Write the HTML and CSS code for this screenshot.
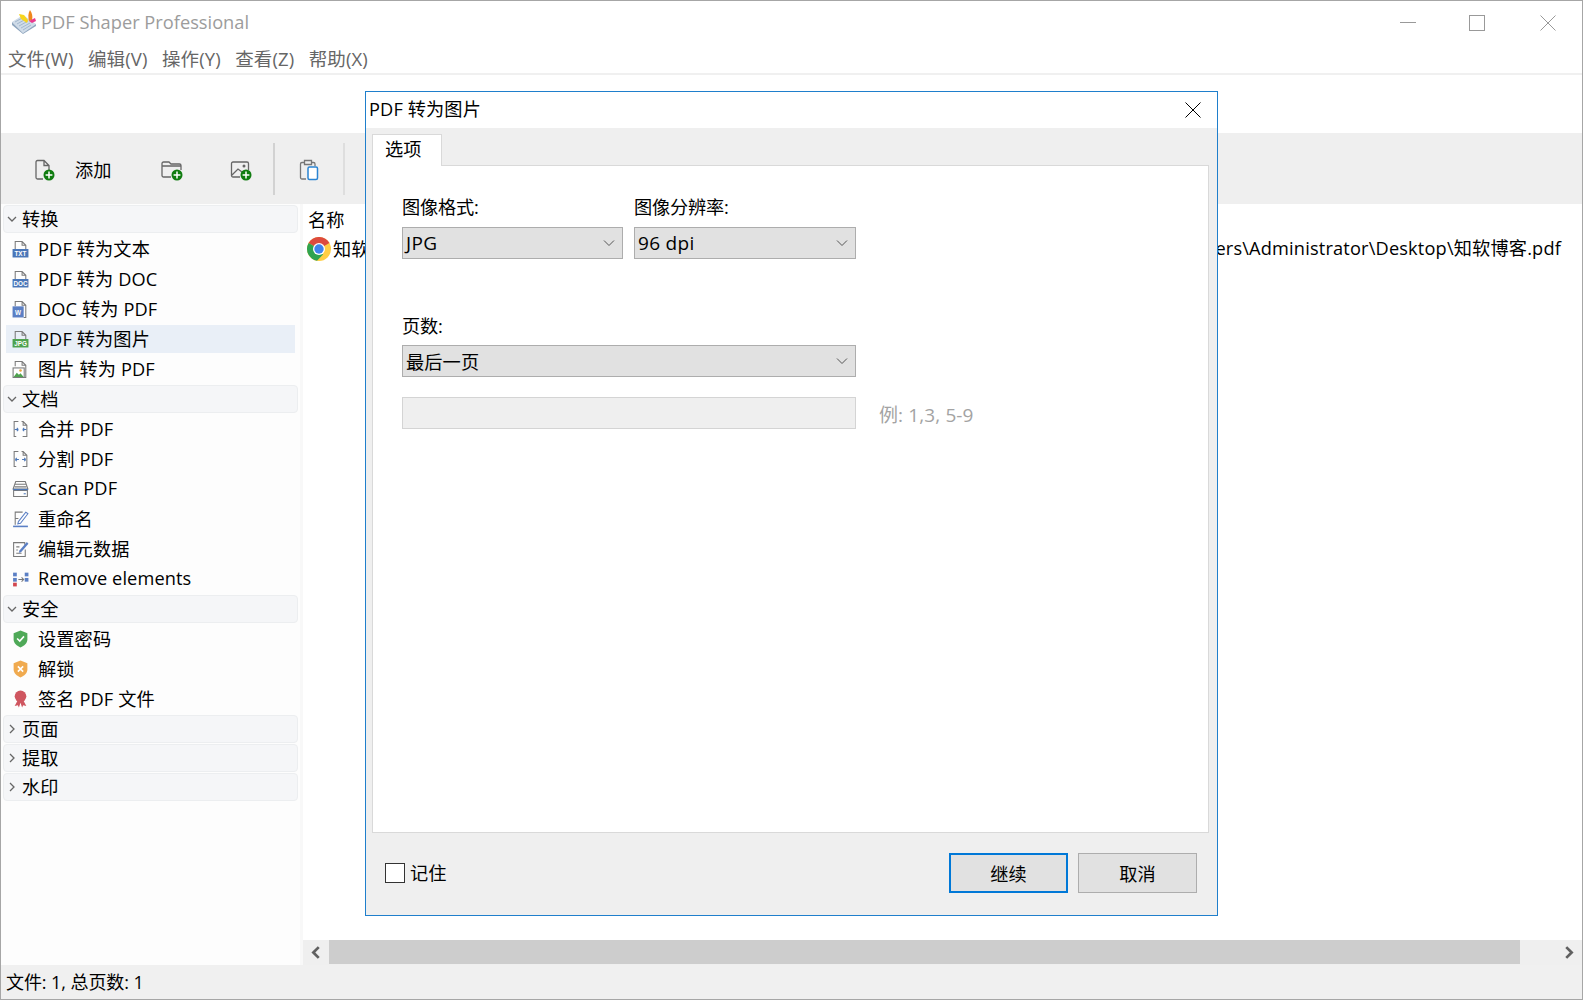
FILE: index.html
```html
<!DOCTYPE html>
<html lang="zh-CN">
<head>
<meta charset="utf-8">
<title>PDF Shaper Professional</title>
<link rel="stylesheet" href="styles.css">
</head>
<body>
<svg class="defs" width="0" height="0" aria-hidden="true">
  <defs>
    <symbol id="sheet" viewBox="0 0 16 17">
      <path d="M3 9V1.500h6.500L13 5v4M9.500 1.500V5H13" fill="none" stroke="#7a7a7a" stroke-width="1"/>
    </symbol>
    <symbol id="plus" viewBox="0 0 12 12">
      <circle cx="6" cy="6" r="5.500" fill="#107c10"/>
      <path d="M6 2.600v6.800M2.600 6h6.800" stroke="#fff" stroke-width="1.500"/>
    </symbol>
  </defs>
</svg>

<div class="window">
  <header class="titlebar">
    <div class="title-left">
      <svg class="logo" viewBox="0 0 24 24">
        <path d="M0 12 11 5l13 9-13 9z" fill="#cfdbe8"/>
        <path d="M0 12l11 11 13-9v2l-13 8L0 15z" fill="#8fa6bf"/>
        <path d="M3 12l9-5M5 14l9-5M7 16l9-5M9 18l9-5M11 20l8-5" stroke="#a3b8ce" stroke-width="1"/>
        <path d="M7 4l5 1 4 5-1 3-6-4z" fill="#f7d51d"/>
        <path d="M18 0c2 3 3 6 2 10l-3 1c-1-4-1-8 1-11z" fill="#f0861c"/>
        <path d="M17 11l6-3 1 3-4 2z" fill="#ea3a8f"/>
      </svg>
      <span class="app-name">PDF Shaper Professional</span>
    </div>
    <div class="win-controls">
      <svg class="win-btn win-min" viewBox="0 0 16 16"><path d="M0 7.500h16" stroke="#999" fill="none"/></svg>
      <svg class="win-btn" viewBox="0 0 16 16"><rect x=".5" y=".5" width="15" height="15" fill="none" stroke="#999"/></svg>
      <svg class="win-btn" viewBox="0 0 16 16"><path d="M.5.500l15 15M15.500.500l-15 15" stroke="#999" fill="none"/></svg>
    </div>
  </header>

  <nav class="menubar">
    <span>文件(W)</span><span>编辑(V)</span><span>操作(Y)</span><span>查看(Z)</span><span>帮助(X)</span>
  </nav>

  <div class="blank"></div>

  <div class="toolbar">
    <div class="tool tool-add">
      <svg class="tool-icon" viewBox="0 0 22 22">
        <path d="M3 18.500V3a1.500 1.500 0 0 1 1.500-1.500H11L16 6.500V11M11 1.500v5h5M3 18.500a1.500 1.500 0 0 0 1.500 1.500H10" fill="none" stroke="#666" stroke-width="1.300"/>
        <use href="#plus" x="10" y="10" width="12" height="12"/>
      </svg>
      <span>添加</span>
    </div>
    <div class="tool tool-folder">
      <svg class="tool-icon" viewBox="0 0 22 22">
        <path d="M10 18H2.500A1.500 1.500 0 0 1 1 16.500V4.500A1.500 1.500 0 0 1 2.500 3H8l2 2h8.500A1.500 1.500 0 0 1 20 6.500V11M1 7h19" fill="none" stroke="#666" stroke-width="1.300"/>
        <use href="#plus" x="10" y="10" width="12" height="12"/>
      </svg>
    </div>
    <div class="tool tool-image">
      <svg class="tool-icon" viewBox="0 0 22 22">
        <path d="M10 18H3a1.500 1.500 0 0 1-1.500-1.500v-12A1.500 1.500 0 0 1 3 3h14a1.500 1.500 0 0 1 1.500 1.500V11M2 16l6-6 4 3" fill="none" stroke="#666" stroke-width="1.300"/>
        <circle cx="14" cy="7" r="1.500" fill="#666"/>
        <use href="#plus" x="10" y="10" width="12" height="12"/>
      </svg>
    </div>
    <div class="sep sep-dark"></div>
    <div class="tool tool-clip">
      <svg class="tool-icon" viewBox="0 0 20 22">
        <path d="M7 20H3a1.500 1.500 0 0 1-1.500-1.500V5A1.500 1.500 0 0 1 3 3.500h2M13 3.500h1.500A1.500 1.500 0 0 1 16 5v2M5.500 1.500h7v4h-7z" fill="none" stroke="#777" stroke-width="1.300"/>
        <rect x="9" y="8" width="9.500" height="12.500" rx="1.500" fill="#fff" stroke="#2a84d2" stroke-width="1.500"/>
      </svg>
    </div>
    <div class="sep sep-light"></div>
  </div>

  <div class="main">
    <aside class="sidebar">
      <div class="group"><svg class="caret" viewBox="0 0 10 10"><path d="M1 3l4 4 4-4" fill="none" stroke="#666" stroke-width="1.300"/></svg><span>转换</span></div>
      <div class="item">
        <svg class="ico" viewBox="0 0 16 17"><use href="#sheet"/><rect x=".5" y="8.500" width="15" height="8" fill="#4a76b8"/><text x="8" y="15" class="ico-text">TXT</text></svg>
        <span>PDF 转为文本</span>
      </div>
      <div class="item">
        <svg class="ico" viewBox="0 0 16 17"><use href="#sheet"/><rect x=".5" y="8.500" width="15" height="8" fill="#4a76b8"/><text x="8" y="15" class="ico-text">DOC</text></svg>
        <span>PDF 转为 DOC</span>
      </div>
      <div class="item">
        <svg class="ico" viewBox="0 0 16 17"><path d="M3 6V1.500h6.500L13 5v11.500h-2M9.500 1.500V5H13" fill="none" stroke="#7a7a7a"/><rect x=".5" y="6" width="10.500" height="10.500" fill="#5b7fc4"/><text x="5.700" y="14" class="ico-text">W</text></svg>
        <span>DOC 转为 PDF</span>
      </div>
      <div class="item selected">
        <svg class="ico" viewBox="0 0 16 17"><use href="#sheet"/><rect x=".5" y="8.500" width="15" height="8" fill="#4ea24e"/><text x="8" y="15" class="ico-text">JPG</text></svg>
        <span>PDF 转为图片</span>
      </div>
      <div class="item">
        <svg class="ico" viewBox="0 0 16 17"><path d="M3 6V1.500h6.500L13 5v11.500h-2M9.500 1.500V5H13" fill="none" stroke="#7a7a7a"/><rect x="1" y="7.500" width="10.500" height="9" fill="#fff" stroke="#7a7a7a"/><path d="M1.500 16l3-4 2 2 1.500-1.500 3 3.500z" fill="#4ea24e"/><circle cx="8" cy="10" r="1.200" fill="#e8a33d"/></svg>
        <span>图片 转为 PDF</span>
      </div>

      <div class="group"><svg class="caret" viewBox="0 0 10 10"><path d="M1 3l4 4 4-4" fill="none" stroke="#666" stroke-width="1.300"/></svg><span>文档</span></div>
      <div class="item">
        <svg class="ico" viewBox="0 0 16 17"><path d="M6 1.500H2v14h2M10 15.500h4V5l-3.500-3.500H9M10.500 1.500V5H14" fill="none" stroke="#7a7a7a"/><path d="M2.500 9H6M6 9L4.500 7.500M6 9l-1.500 1.500M13.500 9H10M10 9l1.500-1.500M10 9l1.500 1.500" fill="none" stroke="#4a76b8"/></svg>
        <span>合并 PDF</span>
      </div>
      <div class="item">
        <svg class="ico" viewBox="0 0 16 17"><path d="M6 1.500H2v14h2M10 15.500h4V5l-3.500-3.500H9M10.500 1.500V5H14" fill="none" stroke="#7a7a7a"/><path d="M3 9h3.500M3 9l1.500-1.500M3 9l1.500 1.500M13 9H9.500M13 9l-1.500-1.500M13 9l-1.500 1.500" fill="none" stroke="#4a76b8"/></svg>
        <span>分割 PDF</span>
      </div>
      <div class="item">
        <svg class="ico" viewBox="0 0 16 17"><path d="M3.500 1.500h9L15 8.500H1zM1.500 10h13v5.500h-13zM3 4h10M2.500 6.500h11" fill="none" stroke="#7a7a7a"/><path d="M1 9h14" stroke="#4a76b8" stroke-width="1.200"/><path d="M11 13h2" stroke="#4a76b8"/></svg>
        <span>Scan PDF</span>
      </div>
      <div class="item">
        <svg class="ico" viewBox="0 0 16 17"><path d="M10 2H3v12M3 8h3" fill="none" stroke="#7a7a7a"/><path d="M6 11l7-9 2 1.500-7 9-2.500.5z" fill="#fff" stroke="#5b7fc4"/><path d="M1 15.500h14" stroke="#5b7fc4" stroke-width="1.500"/></svg>
        <span>重命名</span>
      </div>
      <div class="item">
        <svg class="ico" viewBox="0 0 16 17"><path d="M12 4.500V2.500H1.500v13h11V9" fill="none" stroke="#7a7a7a"/><path d="M4 6.500h3M4 9.500h1.500M4 12.500h5" stroke="#7a7a7a"/><path d="M7 10l7-8 1.500 1.500-7 8-2 .5z" fill="#5b7fc4"/></svg>
        <span>编辑元数据</span>
      </div>
      <div class="item">
        <svg class="ico" viewBox="0 0 16 17"><rect x="1" y="2.500" width="3.500" height="3.500" fill="#5b7fc4"/><rect x="1" y="7.500" width="3.500" height="3.500" fill="#5b7fc4"/><rect x="1" y="12" width="3.500" height="3.500" fill="#d2474f"/><rect x="12" y="2.500" width="3.500" height="3.500" fill="#5b7fc4"/><rect x="12" y="7.500" width="3.500" height="3.500" fill="#5b7fc4"/><path d="M6 9h5M9 7l2 2-2 2" fill="none" stroke="#777"/></svg>
        <span>Remove elements</span>
      </div>

      <div class="group"><svg class="caret" viewBox="0 0 10 10"><path d="M1 3l4 4 4-4" fill="none" stroke="#666" stroke-width="1.300"/></svg><span>安全</span></div>
      <div class="item">
        <svg class="ico" viewBox="0 0 16 17"><path d="M8 .5l6.500 2.500v6c0 3.500-3 6-6.500 7.500C4.500 15 1.500 12.500 1.500 9V3z" fill="#4fa958"/><path d="M4.800 8l2.500 2.500 4-4.500" fill="none" stroke="#fff" stroke-width="1.500"/></svg>
        <span>设置密码</span>
      </div>
      <div class="item">
        <svg class="ico" viewBox="0 0 16 17"><path d="M8 .5l6.500 2.500v6c0 3.500-3 6-6.500 7.500C4.500 15 1.500 12.500 1.500 9V3z" fill="#f0aa4f"/><path d="M5.500 6l5 5M10.500 6l-5 5" fill="none" stroke="#fff" stroke-width="1.500"/></svg>
        <span>解锁</span>
      </div>
      <div class="item">
        <svg class="ico" viewBox="0 0 16 17"><circle cx="8" cy="6" r="5.500" fill="#cf5660"/><path d="M5 10.500L2.500 15l3-.5 1 2L8 12l1.500 4.500 1-2 3 .5L11 10.500z" fill="#cf5660"/></svg>
        <span>签名 PDF 文件</span>
      </div>

      <div class="group"><svg class="caret" viewBox="0 0 10 10"><path d="M3 1l4 4-4 4" fill="none" stroke="#666" stroke-width="1.300"/></svg><span>页面</span></div>
      <div class="group"><svg class="caret" viewBox="0 0 10 10"><path d="M3 1l4 4-4 4" fill="none" stroke="#666" stroke-width="1.300"/></svg><span>提取</span></div>
      <div class="group"><svg class="caret" viewBox="0 0 10 10"><path d="M3 1l4 4-4 4" fill="none" stroke="#666" stroke-width="1.300"/></svg><span>水印</span></div>
    </aside>

    <section class="content">
      <div class="list">
        <div class="col-head">名称</div>
        <div class="row">
          <div class="row-name">
            <svg class="chrome" viewBox="0 0 24 24">
              <circle cx="12" cy="12" r="12" fill="#ffce44"/>
              <path d="M12 12 1.600 6A12 12 0 0 1 22.400 6z" fill="#dd4b3e"/>
              <path d="M12 12 1.600 6A12 12 0 0 0 10 23.800L16 17.500z" fill="#2fa350"/>
              <circle cx="12" cy="12" r="6" fill="#fff"/>
              <circle cx="12" cy="12" r="4.700" fill="#3f84ed"/>
            </svg>
            <span class="row-file">知软</span>
          </div>
          <span class="row-path">C:\Users\Administrator\Desktop\知软博客.pdf</span>
        </div>
      </div>
      <div class="hscroll">
        <div class="arrow arrow-left"><svg viewBox="0 0 10 12"><path d="M8 1 3 6l5 5" fill="none" stroke="#606060" stroke-width="2.500"/></svg></div>
        <div class="thumb"></div>
        <div class="arrow arrow-right"><svg viewBox="0 0 10 12"><path d="M2 1l5 5-5 5" fill="none" stroke="#606060" stroke-width="2.500"/></svg></div>
      </div>
    </section>
  </div>

  <footer class="statusbar"><span>文件: 1, 总页数: 1</span></footer>

  <div class="dialog">
    <div class="dlg-title">
      <span>PDF 转为图片</span>
      <svg class="dlg-close" viewBox="0 0 16 16"><path d="M.5.500l15 15M15.500.500l-15 15" stroke="#000" fill="none"/></svg>
    </div>
    <div class="tabs"><div class="tab">选项</div></div>
    <div class="pane">
      <div class="two-col">
        <div class="field field-a">
          <label>图像格式:</label>
          <div class="combo"><span class="latin">JPG</span><svg class="chev" viewBox="0 0 12 8"><path d="M1 1.500l5 5 5-5" fill="none" stroke="#555"/></svg></div>
        </div>
        <div class="field field-b">
          <label>图像分辨率:</label>
          <div class="combo"><span class="latin">96 dpi</span><svg class="chev" viewBox="0 0 12 8"><path d="M1 1.500l5 5 5-5" fill="none" stroke="#555"/></svg></div>
        </div>
      </div>
      <div class="field field-wide">
        <label>页数:</label>
        <div class="combo"><span class="cjk-value">最后一页</span><svg class="chev" viewBox="0 0 12 8"><path d="M1 1.500l5 5 5-5" fill="none" stroke="#555"/></svg></div>
      </div>
      <div class="range-row">
        <div class="range-input"></div>
        <span class="hint">例: 1,3, 5-9</span>
      </div>
    </div>
    <div class="dlg-foot">
      <div class="remember"><span class="check"></span><span class="remember-text">记住</span></div>
      <div class="btns">
        <div class="btn btn-primary">继续</div>
        <div class="btn">取消</div>
      </div>
    </div>
  </div>
</div>
</body>
</html>
```

FILE: styles.css
```css
* { box-sizing: border-box; }
html, body { margin: 0; padding: 0; background: #fff; }
body {
  width: 1583px;
  height: 1000px;
  overflow: hidden;
  font-family: "Open Sans", "Noto Sans CJK SC", sans-serif;
  font-size: 18.200px;
  letter-spacing: .12px;
  color: #000;
}
.defs { position: absolute; }

.window {
  position: relative;
  width: 1583px;
  height: 1000px;
  display: flex;
  flex-direction: column;
  border: 1px solid #a6a6a6;
  background: #fff;
}

/* title bar */
.titlebar {
  height: 42px;
  display: flex;
  align-items: center;
  justify-content: space-between;
  flex: none;
}
.title-left { display: flex; align-items: center; padding-left: 11px; }
.logo { width: 24px; height: 24px; margin-right: 5px; }
.app-name { font-size: 18.250px; color: #9c9c9c; letter-spacing: 0; margin-bottom: 2px; }
.win-controls { display: flex; gap: 55px; padding: 2px 26px 0 0; align-items: center; }
.win-btn { width: 16px; height: 16px; display: block; }
.win-min { margin-right: -2px; }

/* menu */
.menubar {
  height: 32px;
  flex: none;
  display: flex;
  gap: 14.500px;
  padding: 0 0 1px 7px;
  align-items: center;
  border-bottom: 2px solid #f0f0f0;
  color: #666;
  font-size: 18.500px;
  letter-spacing: .1px;
}

.blank { height: 58px; flex: none; }

/* toolbar */
.toolbar {
  height: 71px;
  flex: none;
  background: #efefef;
  display: flex;
  align-items: center;
}
.tool { display: flex; align-items: center; }
.tool-icon { width: 22px; height: 22px; display: block; margin-top: 2px; }
.tool-add { margin-left: 32px; gap: 20px; }
.tool-folder { margin-left: 49px; }
.tool-image { margin-left: 47px; }
.tool-clip { margin-left: 23px; }
.sep { width: 2px; height: 52px; }
.sep-dark { background: #d2d2d2; margin-left: 21px; }
.sep-light { background: #dedede; margin-left: 23px; }

/* main */
.main { flex: 1; display: flex; min-height: 0; }
.sidebar {
  width: 302px;
  flex: none;
  background: #fdfdfd;
  border-right: 3px solid #f8f8f8;
  padding: 1px 2px 0 2px;
  display: flex;
  flex-direction: column;
}
.group {
  height: 28px;
  margin-bottom: 1px;
  flex: none;
  background: #f5f6f8;
  border: 1px solid #eceef0;
  border-radius: 4px;
  display: flex;
  align-items: center;
  padding-left: 3px;
  gap: 5px;
}
.item + .group { margin-top: 1px; }
.group span { margin-bottom: 2px; }
.caret { width: 10px; height: 10px; flex: none; }
.item {
  height: 28px;
  margin: 1px 0 1px 3px;
  width: 289px;
  flex: none;
  display: flex;
  align-items: center;
  padding-left: 6px;
  gap: 9px;
}
.item span { margin-bottom: 2px; }
.item.selected { background: #e9eff7; }
.ico { width: 17px; height: 18px; flex: none; }
.ico-text {
  font-family: "Liberation Sans", sans-serif;
  font-size: 6px;
  font-weight: 700;
  letter-spacing: 0;
  fill: #fff;
  text-anchor: middle;
}

/* content */
.content { flex: 1; display: flex; flex-direction: column; min-width: 0; }
.list { flex: 1; padding: 3px 21px 0 4px; }
.col-head { height: 26px; line-height: 26px; padding-left: 1px; }
.row { display: flex; justify-content: space-between; align-items: center; height: 30px; }
.row-name { display: flex; align-items: center; gap: 2px; padding-top: 1px; }
.row-file { white-space: nowrap; margin-top: -2px; }
.chrome { width: 24px; height: 24px; flex: none; }
.row-path { letter-spacing: .17px; margin-bottom: 2px; }

.hscroll { height: 25px; flex: none; display: flex; background: #efefef; }
.arrow { display: flex; align-items: center; flex: none; height: 24px; }
.arrow svg { width: 11px; height: 13px; display: block; }
.arrow-left { width: 26px; padding-left: 7px; }
.arrow-right { width: 62px; justify-content: flex-end; padding-right: 7px; }
.thumb { flex: 1; height: 24px; background: #cdcdcd; }

/* status */
.statusbar {
  height: 34px;
  flex: none;
  background: #f0f0f0;
  display: flex;
  align-items: center;
  padding-left: 5px;
  font-size: 18px;
  letter-spacing: -.08px;
}
.statusbar span { margin-bottom: 2px; }

/* dialog */
.dialog {
  position: absolute;
  left: 364px;
  top: 90px;
  width: 853px;
  height: 825px;
  border: 1px solid #1f7fcc;
  background: #efefef;
  display: flex;
  flex-direction: column;
}
.dlg-title {
  height: 36px;
  flex: none;
  background: #fff;
  display: flex;
  align-items: center;
  justify-content: space-between;
  padding: 0 16px 0 3px;
}
.dlg-title span { margin-bottom: 4px; }
.dlg-close { width: 16px; height: 16px; display: block; }
.tabs { height: 37px; flex: none; padding: 6px 0 0 6px; }
.tab {
  width: 70px;
  height: 32px;
  background: #fff;
  border: 1px solid #d9d9d9;
  border-bottom: 0;
  position: relative;
  z-index: 1;
  padding-left: 12px;
  line-height: 28px;
}
.pane {
  flex: 1;
  margin: 0 8px 0 6px;
  background: #fff;
  border: 1px solid #d9d9d9;
  padding: 29px 0 0 29px;
  display: flex;
  flex-direction: column;
}
.two-col { display: flex; gap: 11px; }
.field label { display: block; height: 26px; line-height: 25px; margin-bottom: 6px; letter-spacing: -.2px; }
.field-a { width: 221px; }
.field-b { width: 222px; }
.field-wide { width: 454px; margin-top: 54px; }
.field-wide label { line-height: 27px; }
.combo {
  height: 32px;
  background: #e1e1e1;
  border: 1px solid #adadad;
  display: flex;
  align-items: center;
  justify-content: space-between;
  padding: 0 7px 0 3px;
}
.latin { font-size: 19px; letter-spacing: .3px; }
.cjk-value { margin-bottom: 1px; }
.chev { width: 12px; height: 8px; display: block; }
.range-row { display: flex; align-items: center; margin-top: 20px; gap: 23px; }
.range-input { width: 454px; height: 32px; background: #efefef; border: 1px solid #d4d4d4; }
.hint { color: #a3a3a3; font-size: 19px; margin-top: 2px; }

.dlg-foot {
  height: 82px;
  flex: none;
  display: flex;
  align-items: flex-start;
  justify-content: space-between;
  padding: 20px 20px 0 19px;
}
.remember { display: flex; align-items: center; gap: 5px; height: 40px; }
.remember-text { margin-bottom: 2px; }
.check { width: 20px; height: 20px; background: #fff; border: 1px solid #333; }
.btns { display: flex; gap: 10px; }
.btn {
  width: 119px;
  height: 40px;
  background: #e1e1e1;
  border: 1px solid #adadad;
  display: flex;
  align-items: center;
  justify-content: center;
}
.btn-primary { border: 2px solid #0078d7; }
```
